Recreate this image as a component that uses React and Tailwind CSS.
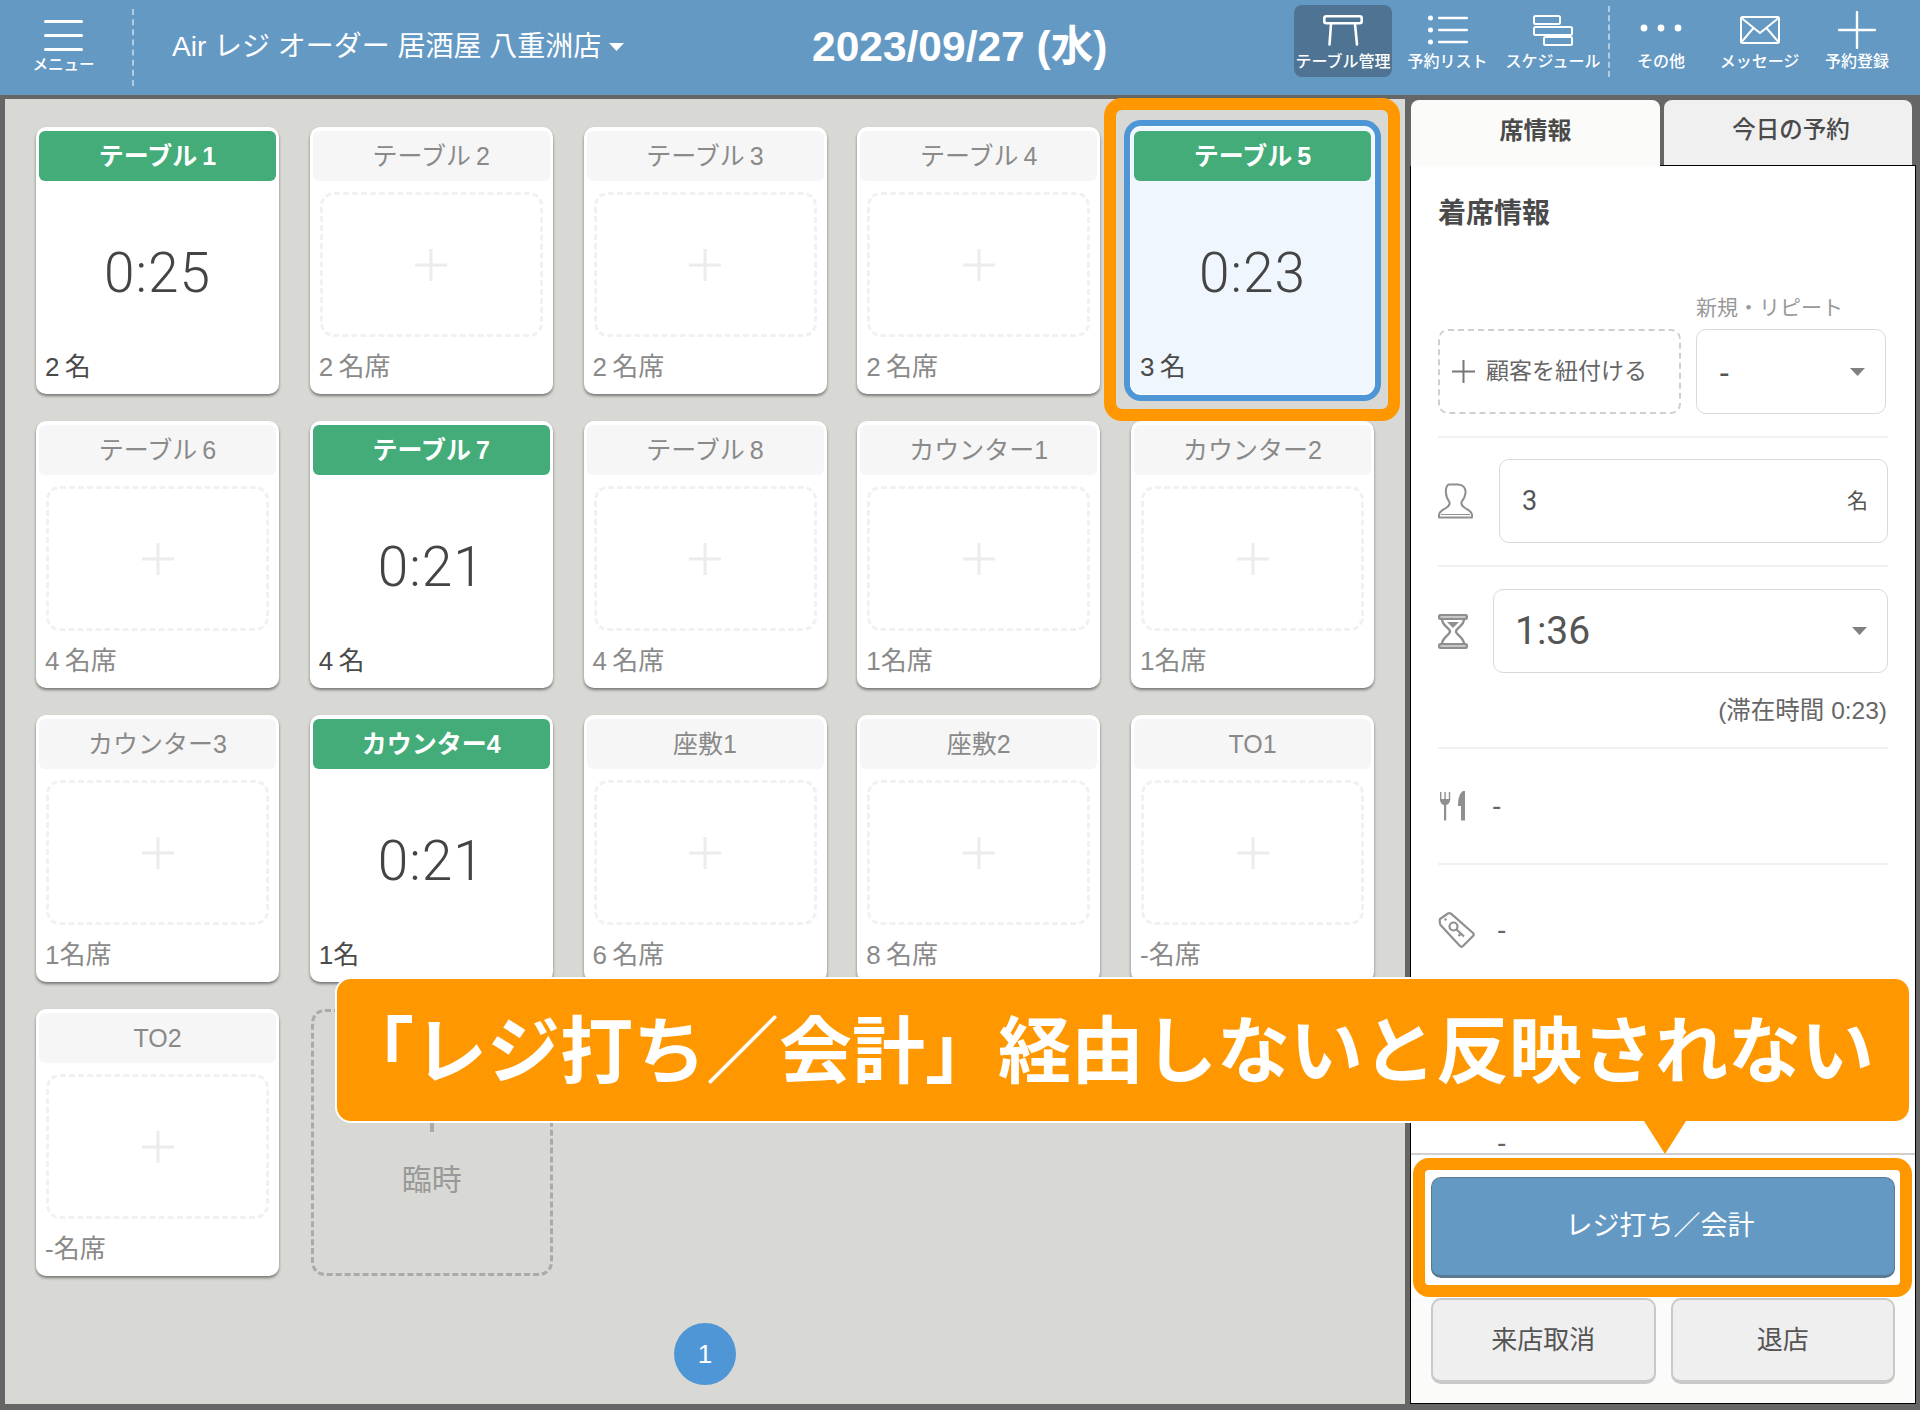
import { Fragment } from 'react'

const SANS = "[font-family:'Liberation_Sans','Noto_Sans_CJK_JP',sans-serif]"

const tables = [
  { name: 'テーブル\u20091', seats: '2\u2009名', time: '0:25' },
  { name: 'テーブル\u20092', seats: '2\u2009名席' },
  { name: 'テーブル\u20093', seats: '2\u2009名席' },
  { name: 'テーブル\u20094', seats: '2\u2009名席' },
  { name: 'テーブル\u20095', seats: '3\u2009名', time: '0:23', selected: true },
  { name: 'テーブル\u20096', seats: '4\u2009名席' },
  { name: 'テーブル\u20097', seats: '4\u2009名', time: '0:21' },
  { name: 'テーブル\u20098', seats: '4\u2009名席' },
  { name: 'カウンター1', seats: '1名席' },
  { name: 'カウンター2', seats: '1名席' },
  { name: 'カウンター3', seats: '1名席' },
  { name: 'カウンター4', seats: '1名', time: '0:21' },
  { name: '座敷1', seats: '6\u2009名席' },
  { name: '座敷2', seats: '8\u2009名席' },
  { name: 'TO1', seats: '-名席' },
  { name: 'TO2', seats: '-名席' },
]

function TableIcon() {
  return (
    <svg width="40" height="31" viewBox="0 0 40 31" fill="none" stroke="white" strokeWidth="2.6" strokeLinecap="round">
      <rect x="1.3" y="1.3" width="37.4" height="7" rx="2" />
      <path d="M8 9 L6.5 29.5 M32 9 L34 29.5" />
    </svg>
  )
}

function ListIcon() {
  return (
    <svg width="40" height="30" viewBox="0 0 40 30" fill="white">
      <circle cx="2.5" cy="3" r="2.5" />
      <circle cx="2.5" cy="15" r="2.5" />
      <circle cx="2.5" cy="27" r="2.5" />
      <rect x="10" y="1.8" width="30" height="2.4" rx="1" />
      <rect x="10" y="13.8" width="30" height="2.4" rx="1" />
      <rect x="10" y="25.8" width="30" height="2.4" rx="1" />
    </svg>
  )
}

function ScheduleIcon() {
  return (
    <svg width="40" height="31" viewBox="0 0 40 31" fill="none" stroke="white" strokeWidth="2">
      <rect x="1" y="1" width="26" height="8" rx="1.5" />
      <rect x="1" y="12" width="38" height="8" rx="1.5" />
      <rect x="11" y="22" width="28" height="8" rx="1.5" />
    </svg>
  )
}

function DotsIcon() {
  return (
    <svg width="42" height="30" viewBox="0 0 42 30" fill="white">
      <circle cx="4" cy="13" r="3.4" />
      <circle cx="21" cy="13" r="3.4" />
      <circle cx="38" cy="13" r="3.4" />
    </svg>
  )
}

function MailIcon() {
  return (
    <svg width="40" height="28" viewBox="0 0 40 28" fill="none" stroke="white" strokeWidth="2">
      <rect x="1" y="1" width="38" height="26" rx="1.5" />
      <path d="M1.5 2 L20 17 L38.5 2 M1.5 26 L13.5 12 M38.5 26 L26.5 12" />
    </svg>
  )
}

function PlusIcon() {
  return (
    <svg width="38" height="38" viewBox="0 0 38 38" fill="none" stroke="white" strokeWidth="2.4" strokeLinecap="round">
      <path d="M19 1 V37 M1 19 H37" />
    </svg>
  )
}

function PersonIcon() {
  return (
    <svg width="35" height="36" viewBox="0 0 35 36" fill="none" stroke="#8f8f8f" strokeWidth="2" strokeLinejoin="round">
      <path d="M10.5 1.5 H20 C25 1.5 28 5 27.5 10 C27.2 14 25 17 23.5 19 C23 21.5 24.5 23.5 27 25 C30 27 33.5 28 34 32 V34.5 H1 V32 C1.5 28 5 27 8 25 C10.5 23.5 12 21.5 11.5 19 C9.5 16.5 8 13 7.8 9 C7.7 5 8.5 3 10.5 1.5 Z" />
      <path d="M3 31.5 H32" strokeWidth="1" />
    </svg>
  )
}

function HourglassIcon() {
  return (
    <svg width="30" height="35" viewBox="0 0 30 35" fill="none" stroke="#8f8f8f" strokeWidth="2.4" strokeLinejoin="round">
      <rect x="1.2" y="1.2" width="27.6" height="3.5" rx="1" />
      <rect x="1.2" y="30.3" width="27.6" height="3.5" rx="1" />
      <path d="M4 5 C4 12 12 14 12 17.5 C12 21 4 23 4 30 M26 5 C26 12 18 14 18 17.5 C18 21 26 23 26 30" />
      <path d="M9 8 H21 L15 14 Z" fill="#8f8f8f" stroke="none" />
    </svg>
  )
}

function CutleryIcon() {
  return (
    <svg width="27" height="30" viewBox="0 0 27 30" fill="#8f8f8f">
      <rect x="1" y="1" width="1.4" height="8" />
      <rect x="5.4" y="1" width="1.4" height="8" />
      <rect x="9.8" y="1" width="1.4" height="8" />
      <path d="M1 8 H11.2 C11.2 12 9 13.5 7.2 14 V29.5 H5 V14 C3 13.5 1 12 1 8 Z" />
      <path d="M24 0 C20.5 2 19 8 19 15 H22 V29.5 H26 V0 Z" />
    </svg>
  )
}

function TagIcon() {
  return (
    <svg width="37" height="36" viewBox="0 0 37 36" fill="none" stroke="#8f8f8f" strokeWidth="2.2" strokeLinejoin="round">
      <path d="M2 7 L10 1.5 C11 1 12 1 13 1.6 L35 21 C36 22 36 23 35 24 L25 34 C24 35 23 35 22 34 L2.5 13 C1.7 12 1.5 8 2 7 Z" />
      <circle cx="7.5" cy="7.5" r="1.2" fill="#8f8f8f" stroke="none" />
      <circle cx="15.5" cy="14.5" r="4" />
      <path d="M18.5 17.5 L26 24.5 M23 21.5 L20.5 24" />
    </svg>
  )
}

function Caret({ className }) {
  return (
    <svg className={className} width="15" height="8" viewBox="0 0 15 8" fill="currentColor">
      <path d="M0 0 H15 L7.5 8 Z" />
    </svg>
  )
}

function NavItem({ label, width, active, children }) {
  return (
    <div className={`flex h-[72px] flex-col items-center rounded-lg ${width} ${active ? 'bg-[#4f7392]' : ''}`}>
      <div className="flex h-[40px] items-center justify-center pt-[10px]">{children}</div>
      <span className="mt-[5px] text-[16px] leading-[24px] font-medium whitespace-nowrap text-white">{label}</span>
    </div>
  )
}

function Header() {
  return (
    <header className="flex h-[95px] shrink-0 items-center bg-[#6499c4]">
      <div className="flex w-[132px] shrink-0 flex-col items-center pr-[5px]">
        <div className="flex w-[39px] flex-col gap-[11px]">
          <span className="h-[3px] rounded-full bg-white" />
          <span className="h-[3px] rounded-full bg-white" />
          <span className="h-[3px] rounded-full bg-white" />
        </div>
        <span className="mt-[4px] text-[15.5px] leading-[20px] font-medium text-white">メニュー</span>
      </div>
      <div className="h-[77px] border-l-2 border-dashed border-white/50" />
      <div className="ml-[38px] flex w-[640px] shrink-0 items-center pb-[1px] text-[28px] leading-[40px] text-white">
        <span className="whitespace-nowrap">Air レジ オーダー 居酒屋 八重洲店</span>
        <Caret className="ml-[8px]" />
      </div>
      <div className="w-[482px] shrink-0 pb-[1px] text-[42.5px] leading-[48px] font-bold whitespace-nowrap text-white">
        2023/09/27 (水)
      </div>
      <nav className="mb-[13px] flex shrink-0 items-center">
        <NavItem label="テーブル管理" width="w-[98px]" active>
          <TableIcon />
        </NavItem>
        <NavItem label="予約リスト" width="w-[111px]">
          <ListIcon />
        </NavItem>
        <NavItem label="スケジュール" width="w-[100px]">
          <ScheduleIcon />
        </NavItem>
        <div className="mr-[1px] ml-[5px] h-[71px] border-l-2 border-dashed border-white/50" />
        <NavItem label="その他" width="w-[100px]">
          <DotsIcon />
        </NavItem>
        <NavItem label="メッセージ" width="w-[97px]">
          <MailIcon />
        </NavItem>
        <NavItem label="予約登録" width="w-[98px]">
          <PlusIcon />
        </NavItem>
      </nav>
    </header>
  )
}

function TableCard({ table }) {
  const busy = Boolean(table.time)
  return (
    <div
      className={`relative flex h-[267px] w-[243px] flex-col rounded-[10px] pt-[4px] ${
        table.selected
          ? 'bg-[#eff6fd] shadow-[0_0_0_1px_#fff,0_0_0_7px_#4f96d6]'
          : 'bg-white shadow-[0_2px_3px_rgba(0,0,0,0.45)]'
      }`}
    >
      {table.selected && (
        <span className="absolute -top-[29px] -right-[26px] -bottom-[27px] -left-[27px] rounded-[18px] border-[12px] border-[#ff9800]" />
      )}
      <div
        className={`mx-[3px] flex h-[50px] shrink-0 items-center justify-center rounded-md text-[25px] leading-[34px] ${
          busy ? 'bg-[#43ac78] font-bold text-white' : 'bg-[#f6f6f6] text-[#8a8a8a]'
        }`}
      >
        {table.name}
      </div>
      {busy ? (
        <div className="flex h-[156px] items-center justify-center pt-[28px] [font-family:Roboto,sans-serif] text-[55px] leading-[60px] font-light tracking-[1px] text-[#444444]">
          {table.time}
        </div>
      ) : (
        <div className="mx-[10px] mt-[11px] flex h-[145px] items-center justify-center rounded-[14px] border-[3px] border-dashed border-[#f1f1f1]">
          <svg width="32" height="32" viewBox="0 0 32 32" stroke="#ececec" strokeWidth="3">
            <path d="M16 0 V32 M0 16 H32" />
          </svg>
        </div>
      )}
      <div
        className={`flex h-[57px] items-center pt-[3px] pl-[9px] text-[26px] leading-[34px] ${
          busy ? 'text-[#4a4a4a]' : 'text-[#8a8a8a]'
        }`}
      >
        {table.seats}
      </div>
    </div>
  )
}

function TempSlot() {
  return (
    <div className="flex h-[267px] w-[242px] flex-col items-center justify-center justify-self-end rounded-[14px] border-[3px] border-dashed border-[#aaaaaa]">
      <svg width="48" height="48" viewBox="0 0 48 48" stroke="#aaaaaa" strokeWidth="4">
        <path d="M24 0 V48 M0 24 H48" />
      </svg>
      <span className="mt-[26px] text-[30px] leading-[44px] text-[#999999]">臨時</span>
    </div>
  )
}

function FloorMap() {
  return (
    <main className="relative flex h-full w-[1400px] shrink-0 flex-col bg-[#d8d9d4] pt-[28px] pl-[31px]">
      <div className="grid grid-cols-[repeat(5,243px)] gap-x-[30.75px] gap-y-[27px]">
        {tables.map((table) => (
          <TableCard key={table.name} table={table} />
        ))}
        <TempSlot />
      </div>
      <div className="mt-[47px] flex justify-center pr-[31px]">
        <span className="flex h-[62px] w-[62px] items-center justify-center rounded-full bg-[#4f96d6] text-[26px] text-white">
          1
        </span>
      </div>
    </main>
  )
}

function Divider() {
  return <div className="h-[2px] shrink-0 bg-[#f1f1f1]" />
}

function SeatPanel() {
  return (
    <aside className="mt-[1px] ml-[5px] flex h-[1304px] w-[506px] shrink-0 flex-col">
      <div className="flex h-[66px] shrink-0 pl-[1px]">
        <div className="flex w-[249px] items-center justify-center rounded-t-lg bg-[#fbfbfa] pb-[4px] text-[24px] font-bold text-[#4a4a4a]">
          席情報
        </div>
        <div className="flex-1 border-b-[1.5px] border-black px-[4px]">
          <div className="flex h-full items-center justify-center rounded-t-lg bg-[#f0f0f0] pb-[4px] pl-[6px] text-[23.5px] font-medium text-[#4a4a4a]">
            今日の予約
          </div>
        </div>
      </div>
      <div className="flex min-h-0 flex-1 flex-col border-x-[1.5px] border-b-[1.5px] border-black bg-white">
        <div className="flex min-h-0 flex-1 flex-col border-b-2 border-[#cfcfcf] px-[27px]">
          <div className="h-[129px] shrink-0 pt-[28px] text-[28px] leading-[40px] font-bold text-[#4a4a4a]">着席情報</div>
          <div className="flex shrink-0 items-end gap-[15px]">
            <div className="flex h-[85px] w-[243px] items-center rounded-[10px] border-2 border-dashed border-[#cfcfcf] pl-[12px] text-[23px] text-[#666666]">
              <svg width="23" height="23" viewBox="0 0 23 23" stroke="#777777" strokeWidth="2">
                <path d="M11.5 0 V23 M0 11.5 H23" />
              </svg>
              <span className="ml-[11px]">顧客を紐付ける</span>
            </div>
            <div className="w-[190px]">
              <div className="h-[34px] text-[21px] leading-[26px] whitespace-nowrap text-[#999999]">新規・リピート</div>
              <div className="flex h-[85px] items-center justify-between rounded-[10px] border border-[#d9d9d9] pr-[20px] pl-[22px] text-[32px] text-[#555555]">
                <span>-</span>
                <Caret className="text-[#808080]" />
              </div>
            </div>
          </div>
          <div className="mt-[22px]">
            <Divider />
          </div>
          <div className="mt-[21px] flex shrink-0 items-center">
            <div className="w-[61px]">
              <PersonIcon />
            </div>
            <div className="flex h-[84px] flex-1 items-center justify-between rounded-[10px] border border-[#d9d9d9] pr-[19px] pl-[22px] text-[#555555]">
              <span className="[font-family:Roboto,sans-serif] text-[27px]">3</span>
              <span className="text-[21px]">名</span>
            </div>
          </div>
          <div className="mt-[22px]">
            <Divider />
          </div>
          <div className="mt-[22px] flex shrink-0 items-center">
            <div className="w-[55px]">
              <HourglassIcon />
            </div>
            <div className="flex h-[84px] flex-1 items-center justify-between rounded-[10px] border border-[#d9d9d9] pr-[20px] pl-[21px] text-[#555555]">
              <span className="[font-family:Roboto,sans-serif] text-[39px]">1:36</span>
              <Caret className="text-[#808080]" />
            </div>
          </div>
          <div className="mt-[22px] h-[32px] shrink-0 pr-[1px] text-right text-[24.5px] leading-[32px] text-[#666666]">
            (滞在時間 0:23)
          </div>
          <div className="mt-[20px]">
            <Divider />
          </div>
          <div className="flex h-[114px] shrink-0 items-center pl-[1px]">
            <CutleryIcon />
            <span className="ml-[26px] text-[28px] text-[#666666]">-</span>
          </div>
          <Divider />
          <div className="flex h-[130px] shrink-0 items-center">
            <TagIcon />
            <span className="ml-[22px] text-[28px] text-[#666666]">-</span>
          </div>
          <div className="mt-auto flex h-[20px] shrink-0 items-center pl-[59px] text-[28px] leading-[20px] text-[#666666]">
            -
          </div>
        </div>
        <div className="shrink-0 bg-white px-[20px] pt-[22px] pb-[20px]">
          <div className="flex h-[101px] items-center justify-center rounded-[10px] border-[1.5px] border-b-[3px] border-[#5a7a93] bg-[#6499c4] pr-[6px] text-[27px] text-white">
            レジ打ち／会計
          </div>
        </div>
        <div className="flex h-[105px] shrink-0 gap-[15px] bg-[#fbfbfa] px-[20px]">
          <div className="flex h-[86px] flex-1 items-center justify-center rounded-[10px] border-2 border-b-[4px] border-[#c9c9c9] bg-[#efefef] text-[26px] text-[#555555]">
            来店取消
          </div>
          <div className="flex h-[86px] flex-1 items-center justify-center rounded-[10px] border-2 border-b-[4px] border-[#c9c9c9] bg-[#efefef] text-[26px] text-[#555555]">
            退店
          </div>
        </div>
      </div>
    </aside>
  )
}

function Callout() {
  return (
    <Fragment>
      <div className="absolute top-[977px] left-[335px] flex h-[146px] w-[1576px] items-center rounded-[16px] border-2 border-white bg-[#ff9800] pt-[3px] pl-[4px] text-[73px] leading-[90px] font-bold whitespace-nowrap text-white">
        「レジ打ち／会計」経由しないと反映されない
      </div>
      <svg className="absolute top-[1121px] left-[1644px]" width="42" height="33" viewBox="0 0 42 33" fill="#ff9800">
        <path d="M0 0 H42 L21 33 Z" />
      </svg>
      <div className="absolute top-[1158px] left-[1413px] h-[139px] w-[499px] rounded-[16px] border-[12px] border-[#ff9800]" />
    </Fragment>
  )
}

export default function App() {
  return (
    <div className={`relative flex h-[1410px] w-[1920px] flex-col overflow-hidden bg-[#666666] ${SANS}`}>
      <Header />
      <div className="flex h-[1309px] pt-[4px] pl-[5px]">
        <FloorMap />
        <SeatPanel />
      </div>
      <Callout />
    </div>
  )
}
